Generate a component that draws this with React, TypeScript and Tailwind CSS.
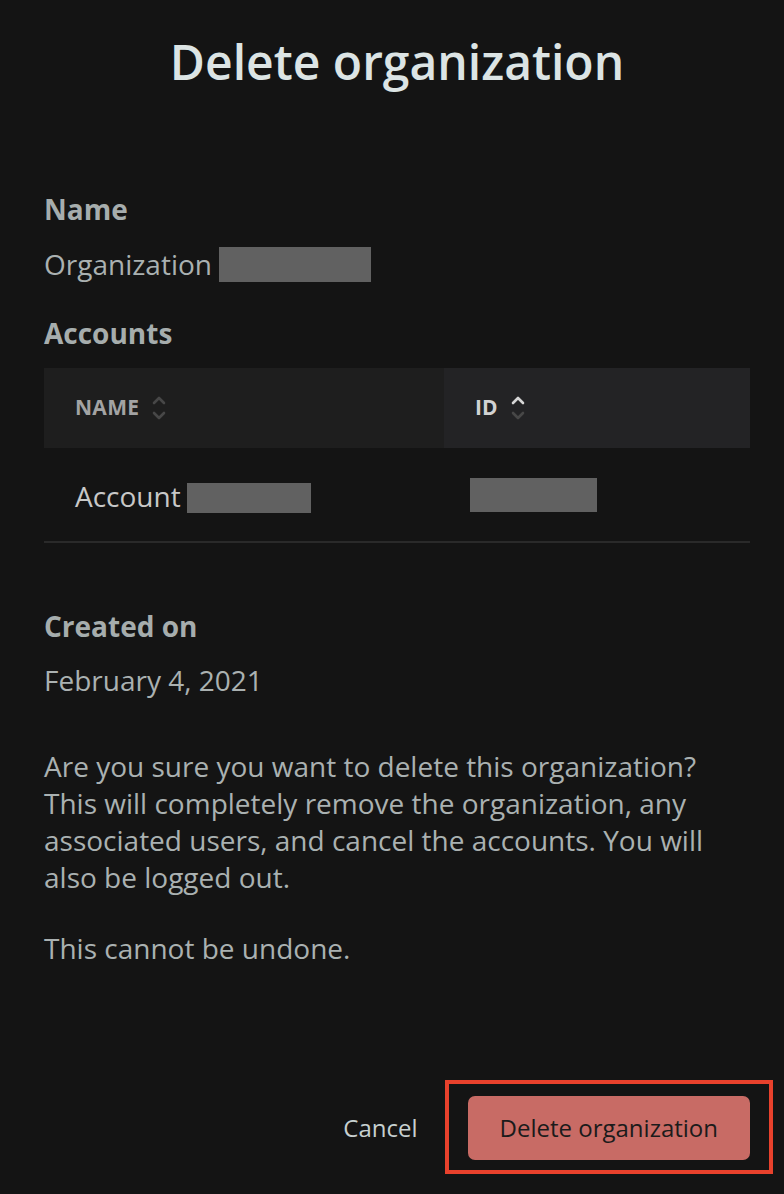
import React from 'react';

function SortIcon({ active }: { active?: 'up' | 'down' }) {
    const dim = '#474747';
    const lit = '#d6d6d6';
    return (
        <svg width="16" height="28" viewBox="0 0 16 28" fill="none" className="shrink-0">
            <path
                d="M3 9l5-5 5 5"
                stroke={active === 'up' ? lit : dim}
                strokeWidth={2.6}
                strokeLinecap="round"
                strokeLinejoin="round"
            />
            <path
                d="M3 19l5 5 5-5"
                stroke={active === 'down' ? lit : dim}
                strokeWidth={2.6}
                strokeLinecap="round"
                strokeLinejoin="round"
            />
        </svg>
    );
}

function Redacted({ className }: { className: string }) {
    return <span className={`inline-block bg-[#616161] ${className}`} />;
}

export default function App() {
    return (
        <div
            className="w-full h-[1194px] bg-[#141414] pl-[44px] pr-[34px] overflow-hidden"
            style={{ fontFamily: '"Open Sans", "Noto Sans", sans-serif' }}
        >
            <h1 className="pt-[30px] text-center text-[48px] leading-[64px] font-semibold text-[#dce4e4]">
                Delete organization
            </h1>

            <div className="mt-[97px] text-[28px] leading-[37px] font-bold text-[#a6adad]">Name</div>
            <div className="mt-[18px] flex items-center text-[28px] leading-[37px] text-[#aab1b1]">
                <span>Organization</span>
                <Redacted className="ml-[7px] w-[152px] h-[35px]" />
            </div>

            <div className="mt-[32px] text-[28px] leading-[37px] font-bold text-[#a6adad]">Accounts</div>

            <div className="mt-[16px]">
                <div className="grid grid-cols-[400px_1fr] h-[80px]">
                    <div className="bg-[#1e1e1e] flex items-center gap-[12px] pl-[31px]">
                        <span className="text-[21px] font-bold tracking-[0.3px] text-[#a3a3a3]">NAME</span>
                        <SortIcon />
                    </div>
                    <div className="bg-[#232325] flex items-center gap-[12px] pl-[31px]">
                        <span className="text-[21px] font-bold text-[#d2d2d2]">ID</span>
                        <SortIcon active="up" />
                    </div>
                </div>
                <div className="grid grid-cols-[400px_1fr] h-[95px] border-b-2 border-[#2a2a2a]">
                    <div className="flex items-center pl-[31px] pt-[2px] text-[28px] text-[#c8c8c8]">
                        <span>Account</span>
                        <Redacted className="ml-[6px] w-[124px] h-[30px] mt-[4px]" />
                    </div>
                    <div className="flex items-center pl-[26px]">
                        <Redacted className="w-[127px] h-[34px]" />
                    </div>
                </div>
            </div>

            <div className="mt-[65px] text-[28px] leading-[37px] font-bold text-[#a6adad]">Created on</div>
            <div className="mt-[17px] text-[28px] leading-[37px] text-[#aab1b1]">February 4, 2021</div>

            <p className="mt-[49px] text-[28px] leading-[37px] text-[#aab1b1] max-w-[690px]">
                Are you sure you want to delete this organization? This will completely remove the
                organization, any associated users, and cancel the accounts. You will also be logged out.
            </p>
            <p className="mt-[34px] text-[28px] leading-[37px] text-[#aab1b1]">This cannot be undone.</p>

            <div className="mt-[129px] flex items-center justify-end gap-[50px]">
                <button className="text-[24px] text-[#c7d0d0]">Cancel</button>
                <div className="relative">
                    <button className="h-[64px] px-[32px] rounded-[7px] bg-[#c86b65] text-[24px] text-[#1b1b1b]">
                        Delete organization
                    </button>
                    <div className="absolute left-[-23px] right-[-23px] top-[-16px] bottom-[-14px] border-4 border-[#e8412c]" />
                </div>
            </div>
        </div>
    );
}
